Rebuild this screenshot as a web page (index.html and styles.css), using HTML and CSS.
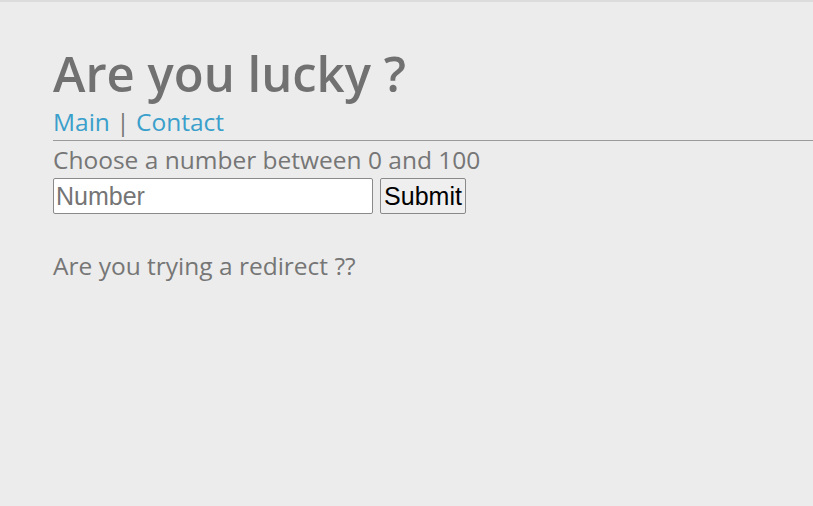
FILE: index.html
```html
<!DOCTYPE html>
<html>
<head>
<meta charset="utf-8">
<link rel="stylesheet" href="styles.css">
</head>
<body>
<div class="page">
  <h1 class="title">Are you lucky ?</h1>
  <nav class="nav"><a href="#">Main</a> | <a href="#">Contact</a></nav>
  <hr class="rule">
  <p class="label">Choose a number between 0 and 100</p>
  <form class="form">
    <input class="num" type="text" placeholder="Number">
    <button class="submit" type="button">Submit</button>
  </form>
  <p class="msg">Are you trying a redirect ??</p>
</div>
</body>
</html>
```
FILE: styles.css
```css
html, body {
  margin: 0;
  padding: 0;
  background: #ececec;
  height: 100%;
}
body {
  border-top: 2px solid #dcdcdc;
  box-sizing: border-box;
  font-family: "Open Sans", sans-serif;
  color: #767676;
}
.page {
  padding: 43px 0 0 53px;
}
.title {
  margin: 0;
  font-size: 49px;
  line-height: 56px;
  font-weight: 600;
  color: #717171;
}
.nav {
  margin-top: 7px;
  font-size: 24.5px;
  line-height: 28px;
  color: #777;
}
.nav a {
  color: #3a9fcb;
  text-decoration: none;
}
.rule {
  margin: 4px 0 0 0;
  border: 0;
  border-top: 1px solid #9a9a9a;
  height: 0;
}
.label {
  margin: 5px 0 0 0;
  font-size: 24.5px;
  line-height: 28px;
}
.form {
  margin-top: 4px;
  display: flex;
  gap: 7px;
  align-items: stretch;
}
.num {
  width: 320px;
  height: 36px;
  box-sizing: border-box;
  font-family: "Liberation Sans", Arial, sans-serif;
  font-size: 25px;
  padding: 0 2px;
  border: 1px solid #8a8a8a;
  border-radius: 2px;
  background: #fff;
  color: #000;
}
.num::placeholder {
  color: #757575;
}
.submit {
  width: 86px;
  height: 36px;
  box-sizing: border-box;
  font-family: "Liberation Sans", Arial, sans-serif;
  font-size: 25px;
  padding: 0;
  border: 1px solid #8a8a8a;
  border-radius: 2px;
  background: #efefef;
  color: #000;
}
.msg {
  margin: 38px 0 0 0;
  font-size: 24.5px;
  line-height: 28px;
}
```
